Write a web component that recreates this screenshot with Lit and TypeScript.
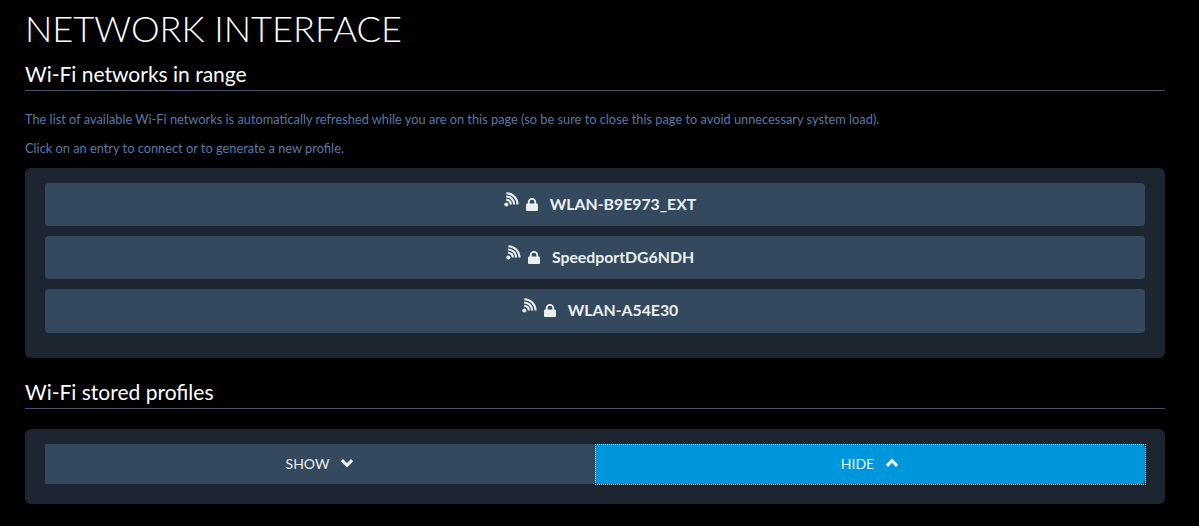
import { LitElement, html, css } from "lit";
import { customElement } from "lit/decorators.js";

const wifi = html`<svg class="wifi" viewBox="0 0 14 14" width="15" height="15" fill="none" stroke="currentColor" stroke-width="2">
  <circle cx="2.200" cy="11.600" r="1.900" fill="currentColor" stroke="none"></circle>
  <path d="M2 7.200a4.400 4.400 0 0 1 4.400 4.400"></path>
  <path d="M2 4.200a7.400 7.400 0 0 1 7.400 7.400"></path>
  <path d="M2.200 1.200a10.400 10.400 0 0 1 10.400 10.400"></path>
</svg>`;
const lock = html`<svg class="lock" viewBox="0 0 12 13" width="12" height="13">
  <path fill="currentColor" d="M1.800 5.400V4.100a4.200 4.200 0 0 1 8.400 0v1.300h.5c.7 0 1.300.6 1.300 1.300v5c0 .7-.6 1.300-1.300 1.300H1.300C.6 13 0 12.400 0 11.700v-5c0-.7.6-1.300 1.300-1.300zm1.900 0h4.600V4.100a2.300 2.300 0 0 0-4.600 0z"></path>
</svg>`;
const chevDown = html`<svg class="chev" viewBox="0 0 14 10" width="14" height="10"><path d="M1.900 2.200 7 7.300l5.100-5.100" fill="none" stroke="currentColor" stroke-width="3.200"></path></svg>`;
const chevUp = html`<svg class="chev" viewBox="0 0 14 10" width="14" height="10"><path d="M1.900 7.800 7 2.700l5.100 5.100" fill="none" stroke="currentColor" stroke-width="3.200"></path></svg>`;

@customElement("app-root")
export class AppRoot extends LitElement {
  static styles = css`
    :host { display: block; background: #000; min-height: 526px; box-sizing: border-box; padding: 0 34px 0 25px; font-family: Lato, "Open Sans", sans-serif; color: #fff; overflow: hidden; }
    h1 { margin: 0; padding-top: 7px; font-size: 36.200px; line-height: 43px; font-weight: 300; color: #fff; }
    h2 { margin: 0; font-size: 21px; line-height: 28px; font-weight: 400; color: #fff; border-bottom: 1px solid #465268; padding-bottom: 2px; }
    .first { margin-top: 10px; }
    p { margin: 0; font-size: 12.800px; line-height: 16px; color: #587ba6; }
    .p1 { margin-top: 20px; }
    .p2 { margin-top: 13px; }
    .panel { background: #1c2530; border-radius: 6px; }
    .list { margin-top: 12px; padding: 15px 20px 25.400px; display: flex; flex-direction: column; gap: 10px; }
    .row { height: 43.200px; box-sizing: border-box; padding: 0 0 2px 10px; background: #34495e; border-radius: 4px; display: flex; align-items: center; justify-content: center; color: #ecf0f1; font-size: 15.800px; font-weight: 700; }
    .row .wifi { margin-right: 7px; margin-top: -8px; }
    .row .lock { margin-right: 12px; margin-top: 1px; }
    .stored { margin-top: 20px; padding: 15px 20px 20px; display: flex; }
    .btn { flex: 1; height: 40px; box-sizing: border-box; padding-bottom: 1px; display: flex; align-items: center; justify-content: center; gap: 11px; font-size: 14px; background: #34495e; color: #ecf0f1; position: relative; }
    .btn.on { background: #0096dc; color: #e6f5fc; border-radius: 4px; }
    .btn.on::after { content: ""; position: absolute; inset: 0 -1px -1px 0; border: 1px dotted #c8d0d8; }
    .s2 { margin-top: 20px; }
  `;
  render() {
    const nets = ["WLAN-B9E973_EXT", "SpeedportDG6NDH", "WLAN-A54E30"];
    return html`
      <h1>NETWORK INTERFACE</h1>
      <h2 class="first">Wi-Fi networks in range</h2>
      <p class="p1">The list of available Wi-Fi networks is automatically refreshed while you are on this page (so be sure to close this page to avoid unnecessary system load).</p>
      <p class="p2">Click on an entry to connect or to generate a new profile.</p>
      <div class="panel list">
        ${nets.map((n) => html`<div class="row">${wifi}${lock}<span>${n}</span></div>`)}
      </div>
      <h2 class="s2">Wi-Fi stored profiles</h2>
      <div class="panel stored">
        <div class="btn"><span>SHOW</span>${chevDown}</div>
        <div class="btn on"><span>HIDE</span>${chevUp}</div>
      </div>
    `;
  }
}
